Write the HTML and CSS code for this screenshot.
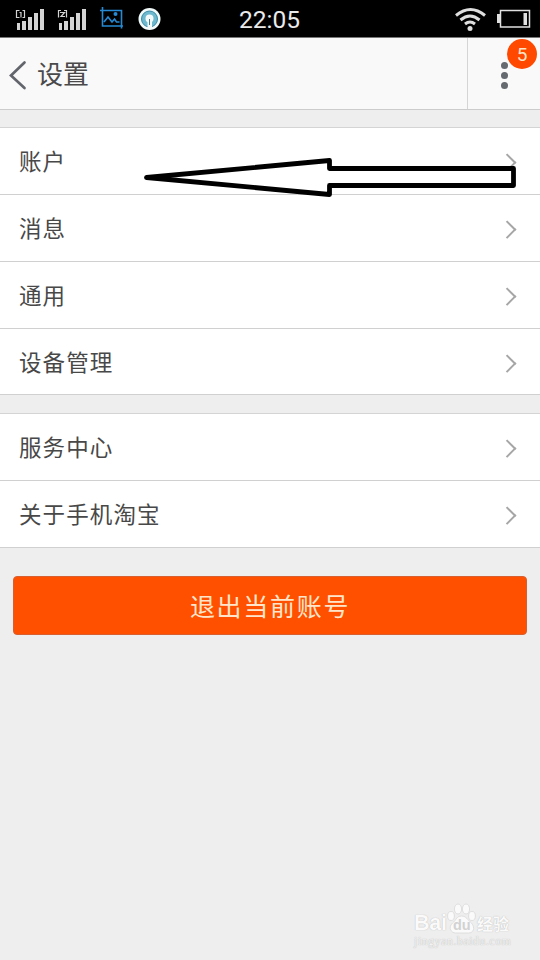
FILE: index.html
```html
<!DOCTYPE html>
<html lang="zh-CN">
<head>
<meta charset="utf-8">
<title>设置</title>
<link rel="stylesheet" href="styles.css">
</head>
<body>
<div class="screen">
  <div class="status">
    <svg class="status-left" width="170" height="37" viewBox="0 0 170 37">
      <g fill="#d4d4d4">
        <path id="bars" d="M17 23h3v7h-3zM22 21h4v9h-4zM28 17h4v13h-4zM34 13h4v17h-4zM40 9h4v21h-4z"/>
        <use href="#bars" x="42"/>
      </g>
      <path d="M19.500 10.500h-3v7h3M22.500 10.500h2v7h-2M19.500 12.500h1.500v5M61 10.500h-2.500v7M64 10.500h2.500v7M60 12.500h4.500l-3.500 4h4" fill="none" stroke="#d4d4d4" stroke-width="1.200"/>
      <g fill="none" stroke="#2689d2" stroke-width="1.600">
        <path d="M100 10.500h21.500v18M102.500 7v19h20.500M104 22l4-5 4 5 2.500-3 2 3h3"/>
      </g>
      <circle cx="115.500" cy="14" r="2" fill="#2689d2"/>
      <circle cx="149.500" cy="19" r="11" fill="#f2fafa"/>
      <circle cx="149.500" cy="19" r="8" fill="#6fb9cf" stroke="#3d8ba5" stroke-width="1"/>
      <circle cx="149.500" cy="18.500" r="4" fill="#f4fafa"/>
      <path d="M147.500 20h4.500v8h-4.500z" fill="#f4fafa"/>
      <path d="M149.500 19v6" stroke="#477887" stroke-width="1"/>
    </svg>
    <span class="clock">22:05</span>
    <svg class="status-right" width="90" height="37" viewBox="450 0 90 37">
      <g fill="none" stroke="#dedede" stroke-width="3">
        <path d="M456 15.500q14.500-12 29 0M460.500 20q9.500-8 19 0M465 24q5-4 10 0"/>
      </g>
      <circle cx="470" cy="28.500" r="2.500" fill="#dedede"/>
      <path d="M500.500 10.500h29v16.500h-29z" fill="none" stroke="#e0e0e0" stroke-width="1.500"/>
      <path d="M497 14h3v9h-3zM523.500 13h3.500v12h-3.500z" fill="#e0e0e0"/>
    </svg>
  </div>
  <header class="header">
    <svg class="back" width="18" height="30" viewBox="0 0 18 30"><path d="M15.500 2.500L2 15.500 15.500 28" fill="none" stroke="#62666c" stroke-width="2.700" stroke-linecap="round"/></svg>
    <h1 class="title">设置</h1>
    <div class="more"><i class="dot"></i><i class="dot"></i><i class="dot"></i><span class="badge">5</span></div>
  </header>
  <main>
    <ul class="list">
      <li class="row"><span>账户</span><i class="chevron"></i></li>
      <li class="row"><span>消息</span><i class="chevron"></i></li>
      <li class="row"><span>通用</span><i class="chevron"></i></li>
      <li class="row row-short"><span>设备管理</span><i class="chevron"></i></li>
    </ul>
    <ul class="list">
      <li class="row"><span>服务中心</span><i class="chevron"></i></li>
      <li class="row"><span>关于手机淘宝</span><i class="chevron"></i></li>
    </ul>
    <button class="logout">退出当前账号</button>
  </main>
  <svg class="arrow" width="376" height="42" viewBox="142 156 376 42"><path d="M146.500 177.500L329.500 160.500V168.500H513.500V185.500H329.500V194.500Z" fill="#fff" stroke="#000" stroke-width="4.800" stroke-linejoin="round"/></svg>
  <div class="watermark">
    <div class="mark-line">
      <span class="mark-bai">Bai</span>
      <span class="paw">
        <svg width="30" height="32" viewBox="0 0 30 32"><g fill="#fafafa" stroke="#d8d8d8" stroke-width=".8"><ellipse cx="4" cy="14" rx="3.400" ry="4.500"/><ellipse cx="11" cy="7" rx="3.600" ry="5"/><ellipse cx="19" cy="7" rx="3.600" ry="5"/><ellipse cx="25" cy="14" rx="3.400" ry="4.500"/><path d="M14.500 14c-5 0-5 4-9 7-5 5-1 10 3 10h13c5 0 7-5 3-10-4-3-5-7-10-7z"/></g></svg>
        <span class="du">du</span>
      </span>
      <span class="mark-jy">经验</span>
    </div>
    <div class="mark-url">jingyan.baidu.com</div>
  </div>
</div>
</body>
</html>
```
FILE: styles.css
```css
* { box-sizing: border-box; }
body { margin: 0; background: #eee; font-family: "Liberation Sans", "Noto Sans CJK SC", sans-serif; }
.screen { position: relative; height: 960px; overflow: hidden; background: #eee; }
.status { display: flex; justify-content: space-between; height: 38px; background: #000; border-bottom: 1px solid #777; }
.status svg { display: block; }
.clock { width: 80px; margin-left: 60px; margin-right: auto; text-align: center; padding-right: 1px; font: 24.500px/40px Roboto, sans-serif; color: #eaeaea; white-space: nowrap; }
.header { display: flex; align-items: center; height: 72px; background: #f9f9f9; border-bottom: 1px solid #ccc; padding-left: 9px; }
.back { margin-top: 3px; }
.title { flex: 1; margin: -2px 0 0 10px; font-size: 26px; line-height: 70px; font-weight: 400; color: #4a4a4a; font-family: "Noto Sans CJK SC", sans-serif; }
.more { position: relative; display: flex; flex-direction: column; align-items: center; justify-content: center; gap: 3px; width: 73px; height: 71px; border-left: 1px solid #d5d5d5; padding-top: 4px; }
.dot { width: 7px; height: 7px; border-radius: 50%; background: #656970; }
.badge { position: absolute; left: 39px; top: 1px; width: 30px; height: 30px; border-radius: 50%; background: #ff4800; color: #ffe4c8; font: 19px/31px Roboto, sans-serif; text-align: center; }
.list { list-style: none; margin: 17px 0 0; padding: 0; background: #fff; border-top: 1px solid #d4d4d4; }
.list + .list { margin-top: 18px; }
.row { display: flex; align-items: center; justify-content: space-between; height: 67px; padding: 0 27px 0 19px; border-bottom: 1px solid #d0d0d0; font: 400 22.500px/64px "Noto Sans CJK SC", sans-serif; letter-spacing: 1.100px; color: #484848; }
.row span { margin-top: -2px; }
.row-short { height: 66px; }
.chevron { width: 12.500px; height: 12.500px; border: solid #a6a6a6; border-width: 2px 2px 0 0; transform: rotate(45deg); margin-top: 3px; }
.logout { display: block; width: 514px; height: 59px; margin: 28px 13px 0; padding: 0; border: 1px solid #d86030; border-radius: 4px; background: #ff5000; color: #ffe6cb; font: 25px/57px "Noto Sans CJK SC", sans-serif; letter-spacing: 1.700px; }
.arrow { position: absolute; left: 142px; top: 156px; }
.watermark { position: absolute; left: 414px; top: 901px; width: 100px; color: #fafafa; text-shadow: 0 0 1px #aaa; }
.mark-line { display: flex; align-items: flex-end; height: 33px; white-space: nowrap; }
.mark-bai { width: 33px; font: bold 21.500px/22px "Liberation Sans", sans-serif; letter-spacing: -.300px; }
.paw { position: relative; width: 30px; height: 32px; }
.du { position: absolute; left: 6px; top: 15px; color: #d2d2d2; font: bold 14.500px/16px "Liberation Sans", sans-serif; text-shadow: none; }
.mark-jy { font: bold 16px/22px "Noto Sans CJK SC", sans-serif; }
.mark-url { font: 11.500px/12px "Liberation Serif", serif; margin-top: 1px; letter-spacing: .700px; white-space: nowrap; color: #f2f2f2; }
```
